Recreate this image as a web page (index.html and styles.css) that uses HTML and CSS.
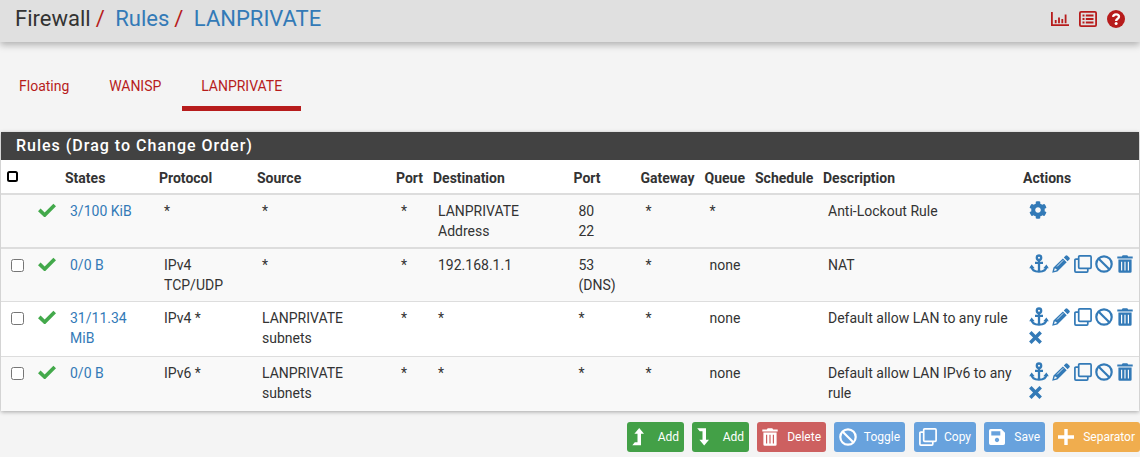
FILE: index.html
```html
<!DOCTYPE html>
<html lang="en">
<head>
<meta charset="utf-8">
<title>Firewall: Rules: LANPRIVATE</title>
<link rel="stylesheet" href="styles.css">
</head>
<body>
<svg class="sprite" aria-hidden="true">
  <symbol id="i-check" viewBox="0 0 18 14"><path d="M1.300 6.900 6.700 12 16.700 2" fill="none" stroke="currentColor" stroke-width="3.700"/></symbol>
  <symbol id="i-gear" viewBox="0 0 512 512"><path fill="currentColor" d="M487.400 315.700l-42.600-24.600c4.300-23.200 4.300-47 0-70.200l42.600-24.600c4.900-2.800 7.100-8.600 5.500-14-11.100-35.600-30-67.800-54.700-94.600-3.800-4.100-10-5.100-14.800-2.300L380.800 110c-17.900-15.400-38.500-27.300-60.800-35.100V25.800c0-5.600-3.900-10.500-9.400-11.700-36.700-8.200-74.300-7.800-109.200 0-5.500 1.200-9.400 6.100-9.400 11.700V75c-22.200 7.900-42.800 19.800-60.800 35.100L88.700 85.500c-4.900-2.800-11-1.900-14.800 2.300-24.700 26.700-43.600 58.900-54.700 94.600-1.700 5.400.6 11.200 5.500 14L67.300 221c-4.300 23.200-4.300 47 0 70.200l-42.600 24.600c-4.900 2.800-7.100 8.600-5.500 14 11.100 35.600 30 67.800 54.700 94.600 3.800 4.100 10 5.100 14.800 2.300l42.600-24.600c17.900 15.400 38.500 27.300 60.800 35.100v49.200c0 5.600 3.900 10.500 9.400 11.700 36.700 8.200 74.300 7.800 109.200 0 5.500-1.200 9.400-6.100 9.400-11.700v-49.200c22.200-7.900 42.800-19.800 60.800-35.100l42.600 24.600c4.900 2.800 11 1.900 14.800-2.300 24.700-26.700 43.600-58.900 54.700-94.600 1.500-5.500-.7-11.300-5.600-14.100zM256 336c-44.100 0-80-35.900-80-80s35.900-80 80-80 80 35.900 80 80-35.900 80-80 80z"/></symbol>
  <symbol id="i-anchor" viewBox="0 0 20 20"><g fill="none" stroke="currentColor" stroke-width="2.300"><circle cx="10" cy="3.700" r="2.200"/><path d="M10 6v12M6 8.800h8M2.500 12.500c.3 3.600 3.200 5.200 7.500 5.200s7.200-1.600 7.500-5.200"/></g><path fill="currentColor" d="M.2 14.200 2.600 10.600l3.100 3.600zM14.300 14.200l3.100-3.600 2.400 3.600z"/></symbol>
  <symbol id="i-pencil" viewBox="0 0 18 18"><path fill="currentColor" d="M13.500.8q1-1 2 0l1.800 1.800q1 1 0 2L15.600 6.300 11.800 2.500zM10.900 3.400l3.800 3.800L5.400 16.500.2 17.800l1.300-5.200zM2.700 13.400l-.6 2.500 2.500-.6v-1.200H3.500v-.9z" fill-rule="evenodd"/><path d="M5 11.500 11.200 5.300" stroke="#fff" stroke-width=".8"/></symbol>
  <symbol id="i-clone" viewBox="0 0 18 18"><g fill="none" stroke="currentColor" stroke-width="1.700"><rect x="4.700" y=".9" width="12.400" height="12.400" rx="1"/><path d="M4.700 4.200H1.900q-1 0-1 1v10.900q0 1 1 1h10.900q1 0 1-1v-2.800"/></g></symbol>
  <symbol id="i-ban" viewBox="0 0 18 18"><g fill="none" stroke="currentColor" stroke-width="2.200"><circle cx="9" cy="9" r="7.700"/><path d="m3.700 3.700 10.600 10.600"/></g></symbol>
  <symbol id="i-trash" viewBox="0 0 16 18"><path fill="currentColor" fill-rule="evenodd" d="M.3 1.500h4.500L5.700.2h4.600l.9 1.300h4.500v2.100H.3zM1.400 4.500h13.200v12q0 1.300-1.300 1.300H2.700q-1.300 0-1.300-1.300zM4 6.700v8.900h1.200V6.700zM7.400 6.700v8.900h1.200V6.700zM10.800 6.700v8.900H12V6.700z"/></symbol>
  <symbol id="i-times" viewBox="0 0 12 12"><path d="m1.200 1.200 9.600 9.600m0-9.600-9.600 9.600" stroke="currentColor" stroke-width="3.200"/></symbol>
  <symbol id="i-up" viewBox="0 0 12 18"><path fill="currentColor" d="M7.200 0l4.800 5.800H9V17.300H.3L2.800 14.300h2.700V5.800H2.400z"/></symbol>
  <symbol id="i-down" viewBox="0 0 12 18"><path fill="currentColor" d="M7.200 17.500l4.800-5.800H9V.3H.2L2.700 3.300h2.800v8.400H2.400z"/></symbol>
  <symbol id="i-save" viewBox="0 0 16 16"><path fill="currentColor" fill-rule="evenodd" d="M1.700 0h10.600L16 3.700v10.600q0 1.700-1.700 1.700H1.700Q0 16 0 14.300V1.700Q0 0 1.700 0zM2.300 2.300v4.200h9V2.300zM8 8.800a2.200 2.200 0 1 0 .01 0z"/></symbol>
  <symbol id="i-plus" viewBox="0 0 16 16"><path d="M8 0v16M0 8h16" stroke="currentColor" stroke-width="3.400"/></symbol>
  <symbol id="i-chart" viewBox="0 0 18 14"><path d="M.9 0v13.100H18M4.700 8v3.200M8 5.500v5.700M11.300 7v4.200M14.600 2.500v8.700" fill="none" stroke="currentColor" stroke-width="1.800"/></symbol>
  <symbol id="i-list" viewBox="0 0 18 16"><rect x=".9" y=".9" width="16.200" height="14.200" rx="1.200" fill="none" stroke="currentColor" stroke-width="1.800"/><path d="M3.500 4.500h2m1.300 0h7.700M3.500 8h2m1.300 0h7.700M3.500 11.500h2m1.300 0h7.700" stroke="currentColor" stroke-width="1.800"/></symbol>
  <symbol id="i-help" viewBox="0 0 18 18"><circle cx="9" cy="9" r="9" fill="currentColor"/><path d="M6 6.900C6.300 5.200 7.400 4.300 9 4.300c1.700 0 3 1 3 2.500 0 2-2.900 2-2.900 4.100" fill="none" stroke="#fff" stroke-width="2.300"/><circle cx="9.100" cy="13.500" r="1.500" fill="#fff"/></symbol>
</svg>

<header class="page-header">
  <nav class="crumbs"><span>Firewall</span><i>/</i><a>Rules</a><i>/</i><a>LANPRIVATE</a></nav>
  <div class="tools">
    <svg class="chart"><use href="#i-chart"/></svg>
    <svg class="list"><use href="#i-list"/></svg>
    <svg class="help"><use href="#i-help"/></svg>
  </div>
</header>

<nav class="tabs"><a>Floating</a><a>WANISP</a><a class="active">LANPRIVATE</a></nav>

<section class="panel">
  <h2>Rules (Drag to Change Order)</h2>
  <table>
    <colgroup><col class="c-box"><col class="c-state"><col class="c-states"><col class="c-proto"><col class="c-source"><col class="c-port"><col class="c-dest"><col class="c-dport"><col class="c-gw"><col class="c-queue"><col class="c-sched"><col class="c-desc"><col></colgroup>
    <thead><tr><th><span class="box box-all"></span></th><th></th><th>States</th><th>Protocol</th><th>Source</th><th>Port</th><th>Destination</th><th>Port</th><th>Gateway</th><th>Queue</th><th>Schedule</th><th>Description</th><th>Actions</th></tr></thead>
    <tbody>
      <tr class="lockout"><td></td><td class="ok"><svg><use href="#i-check"/></svg></td><td><a>3/100 KiB</a></td><td>*</td><td>*</td><td>*</td><td>LANPRIVATE Address</td><td>80<br>22</td><td>*</td><td>*</td><td></td><td>Anti-Lockout Rule</td><td><div class="actions"><svg class="gear"><use href="#i-gear"/></svg></div></td></tr>
      <tr class="nat"><td><span class="box"></span></td><td class="ok"><svg><use href="#i-check"/></svg></td><td><a>0/0 B</a></td><td>IPv4 TCP/UDP</td><td>*</td><td>*</td><td>192.168.1.1</td><td>53 (DNS)</td><td>*</td><td>none</td><td></td><td>NAT</td><td><div class="actions"><svg class="anchor"><use href="#i-anchor"/></svg><svg><use href="#i-pencil"/></svg><svg><use href="#i-clone"/></svg><svg><use href="#i-ban"/></svg><svg class="trash"><use href="#i-trash"/></svg></div></td></tr>
      <tr class="v4"><td><span class="box"></span></td><td class="ok"><svg><use href="#i-check"/></svg></td><td><a>31/11.34 MiB</a></td><td>IPv4 *</td><td>LANPRIVATE subnets</td><td>*</td><td>*</td><td>*</td><td>*</td><td>none</td><td></td><td>Default allow LAN to any rule</td><td><div class="actions"><svg class="anchor"><use href="#i-anchor"/></svg><svg><use href="#i-pencil"/></svg><svg><use href="#i-clone"/></svg><svg><use href="#i-ban"/></svg><svg class="trash"><use href="#i-trash"/></svg><svg class="times"><use href="#i-times"/></svg></div></td></tr>
      <tr class="v6"><td><span class="box"></span></td><td class="ok"><svg><use href="#i-check"/></svg></td><td><a>0/0 B</a></td><td>IPv6 *</td><td>LANPRIVATE subnets</td><td>*</td><td>*</td><td>*</td><td>*</td><td>none</td><td></td><td>Default allow LAN IPv6 to any rule</td><td><div class="actions"><svg class="anchor"><use href="#i-anchor"/></svg><svg><use href="#i-pencil"/></svg><svg><use href="#i-clone"/></svg><svg><use href="#i-ban"/></svg><svg class="trash"><use href="#i-trash"/></svg><svg class="times"><use href="#i-times"/></svg></div></td></tr>
    </tbody>
  </table>
</section>

<div class="buttons">
  <a class="btn add"><svg class="arrow"><use href="#i-up"/></svg>Add</a>
  <a class="btn add"><svg class="arrow"><use href="#i-down"/></svg>Add</a>
  <a class="btn delete"><svg class="bin"><use href="#i-trash"/></svg>Delete</a>
  <a class="btn toggle"><svg><use href="#i-ban"/></svg>Toggle</a>
  <a class="btn copy"><svg><use href="#i-clone"/></svg>Copy</a>
  <a class="btn save"><svg class="disk"><use href="#i-save"/></svg>Save</a>
  <a class="btn separator"><svg class="disk"><use href="#i-plus"/></svg>Separator</a>
</div>
</body>
</html>
```
FILE: styles.css
```css
* { box-sizing: border-box; }
body { margin: 0; width: 1140px; height: 457px; overflow: hidden; background: #f4f4f4; color: #333; font: 14px/20px Roboto, sans-serif; }
.sprite { display: none; }
svg { display: block; flex: none; width: 18px; height: 18px; }
a { color: #337ab7; }

.page-header { display: flex; justify-content: space-between; height: 42px; padding: 6px 15px 0; background: #e0e0e0; box-shadow: 0 3px 7px rgba(0, 0, 0, .28); }
.crumbs { display: flex; font-size: 22px; line-height: 26px; }
.crumbs i { color: #b71c1c; font-style: normal; margin: 0 10.500px 0 5px; }
.tools { display: flex; gap: 10px; color: #b71c1c; padding-top: 4px; }
.tools .chart { height: 14px; margin-top: 2px; }
.tools .list { height: 16px; margin-top: 1px; }

.tabs { display: flex; height: 90px; padding-top: 21px; }
.tabs a { height: 48px; padding: 13px 19px 0; margin-right: 1.800px; color: #b71c1c; }
.tabs .active { border-bottom: 5px solid #b71c1c; }

.panel { height: 279px; margin: 0 1px; background: #fff; box-shadow: 0 1px 4px rgba(0, 0, 0, .32); }
.panel h2 { height: 28px; margin: 0; padding: 0 15px; background: #424242; color: #fff; font-size: 16px; font-weight: 500; line-height: 27px; letter-spacing: 1px; }
table { width: 1138px; table-layout: fixed; border-collapse: separate; border-spacing: 0; }
.c-box { width: 27px; }
.c-state { width: 32px; }
.c-states { width: 94px; }
.c-proto { width: 98px; }
.c-source { width: 139px; }
.c-port { width: 37px; }
.c-dest { width: 140.500px; }
.c-dport { width: 67px; }
.c-gw { width: 64px; }
.c-queue { width: 50.500px; }
.c-sched { width: 68px; }
.c-desc { width: 200px; }
th { height: 35px; padding: 8px 0 5px 5px; border-bottom: 2px solid #ddd; text-align: left; vertical-align: top; font-weight: 700; white-space: nowrap; }
td { padding: 6px 5px 0 10px; vertical-align: top; }
tr.lockout td { height: 54px; border-bottom: 2px solid #ddd; background: #f9f9f9; }
tr.nat td { height: 53px; border-bottom: 1px solid #ddd; background: #f9f9f9; }
tr.v4 td { height: 55px; border-bottom: 1px solid #ddd; }
tr.v6 td { height: 54px; background: #f9f9f9; }
td.ok { padding-left: 9.500px; padding-right: 0; color: #43a94b; }
td.ok svg { height: 14px; margin-top: 2px; }
.box { display: block; width: 13px; height: 13px; margin-top: 4px; border: 1px solid #767676; border-radius: 2.500px; background: #fff; }
.box-all { width: 11px; height: 11px; margin: 3px 0 0 1px; border: 2px solid #000; }
.actions { display: flex; flex-wrap: wrap; align-items: center; gap: 2px 3.500px; width: 112px; margin-top: -1px; padding-left: .5px; color: #337ab7; }
.actions .anchor { width: 20px; height: 20px; }
.actions .trash { width: 16px; }
.actions .gear { margin-top: 1px; }
.actions .times { width: 13px; height: 13px; margin-top: 2px; }

.buttons { display: flex; justify-content: flex-end; gap: 8px; padding-top: 11px; }
.btn { display: flex; align-items: center; justify-content: space-between; height: 30px; padding: 0 5px; border-radius: 3px; color: #fff; font-size: 12px; }
.btn .arrow { width: 12px; }
.btn .bin { width: 16px; }
.btn .disk { width: 16px; height: 16px; }
.add { width: 57px; background: #43a047; }
.delete { width: 69px; background: #cd6060; }
.toggle { width: 71px; background: #68a2dd; }
.copy { width: 62px; margin-left: 1px; background: #68a2dd; }
.save { width: 61px; background: #68a2dd; }
.separator { width: 87px; background: #f0ad4e; }
```
